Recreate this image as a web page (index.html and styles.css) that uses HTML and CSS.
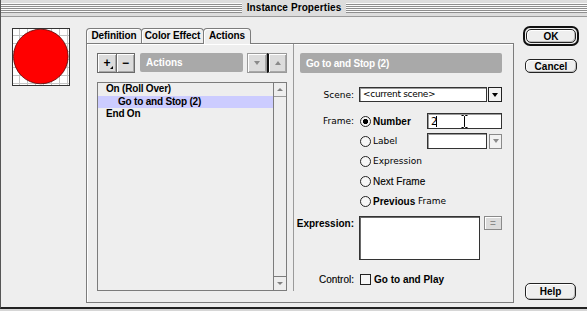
FILE: index.html
```html
<!DOCTYPE html>
<html>
<head>
<meta charset="utf-8">
<title>Instance Properties</title>
<link rel="stylesheet" href="styles.css">
</head>
<body>
<div class="window">
  <div class="titlebar"><span class="title">Instance Properties</span></div>
  <div class="content">
    <div class="preview">
      <svg width="58" height="58" viewBox="0 0 58 58">
        <rect x="0.5" y="0.5" width="57" height="57" fill="#fff" stroke="#333"/>
        <g stroke="#c4c4c4" stroke-width="1">
          <line x1="7.5" y1="1" x2="7.5" y2="57"/><line x1="15.5" y1="1" x2="15.5" y2="57"/>
          <line x1="23.5" y1="1" x2="23.5" y2="57"/><line x1="31.5" y1="1" x2="31.5" y2="57"/>
          <line x1="39.5" y1="1" x2="39.5" y2="57"/><line x1="47.5" y1="1" x2="47.5" y2="57"/>
          <line x1="55.5" y1="1" x2="55.5" y2="57"/>
          <line x1="1" y1="7.5" x2="57" y2="7.5"/><line x1="1" y1="15.5" x2="57" y2="15.5"/>
          <line x1="1" y1="23.5" x2="57" y2="23.5"/><line x1="1" y1="31.5" x2="57" y2="31.5"/>
          <line x1="1" y1="39.5" x2="57" y2="39.5"/><line x1="1" y1="47.5" x2="57" y2="47.5"/>
          <line x1="1" y1="55.5" x2="57" y2="55.5"/>
        </g>
        <circle cx="28.8" cy="28.5" r="27.3" fill="#ff0000" stroke="#5a0000" stroke-width="0.8"/>
      </svg>
    </div>

    <div class="tabbox">
      <div class="tabs">
        <div class="tab t-def">Definition</div>
        <div class="tab t-col">Color Effect</div>
        <div class="tab t-act active">Actions</div>
      </div>
      <div class="panel">
        <div class="left">
          <div class="toolbar">
            <div class="bevel pm plus">+<span class="corner"></span></div>
            <div class="bevel pm minus">&minus;</div>
            <div class="hdr hdr-actions">Actions</div>
            <div class="arrows">
              <div class="bevel abtn"><span class="tri down gray"></span></div>
              <div class="bevel abtn second"><span class="tri up gray"></span></div>
            </div>
          </div>
          <div class="list">
            <div class="rows">
              <div class="row">On (Roll Over)</div>
              <div class="row sel indent">Go to and Stop (2)</div>
              <div class="row">End On</div>
            </div>
            <div class="scrollbar">
              <div class="sarrow sup"><span class="tri up small"></span></div>
              <div class="strack"></div>
              <div class="sarrow sdown"><span class="tri down small"></span></div>
            </div>
          </div>
        </div>

        <div class="right">
          <div class="hdr hdr-right">Go to and Stop (2)</div>

          <div class="frow r-scene">
            <div class="lbl g">Scene:</div>
            <div class="field popup-scene g">&lt;current scene&gt;</div>
            <div class="pbtn"><span class="tri down"></span></div>
          </div>

          <div class="frow radio-row r-frame">
            <div class="lbl g">Frame:</div>
            <div class="opt"><span class="radio on"></span>Number</div>
            <div class="field num">2<span class="caret"></span>
              <svg class="ibeam" width="7" height="13" viewBox="0 0 7 13"><path d="M0.5 0.5h2l1 1 1-1h2M3.5 1.5v10M0.5 12.5h2l1-1 1 1h2" fill="none" stroke="#000" stroke-width="1"/></svg>
            </div>
          </div>

          <div class="frow radio-row">
            <div class="lbl"></div>
            <div class="opt g"><span class="radio"></span>Label</div>
            <div class="field lblfield"></div>
            <div class="pbtn dis"><span class="tri down gray"></span></div>
          </div>

          <div class="frow radio-row">
            <div class="lbl"></div>
            <div class="opt g wide"><span class="radio"></span>Expression</div>
          </div>

          <div class="frow radio-row">
            <div class="lbl"></div>
            <div class="opt wide med"><span class="radio"></span>Next Frame</div>
          </div>

          <div class="frow radio-row">
            <div class="lbl"></div>
            <div class="opt wide"><span class="radio"></span>Previous&nbsp;<span class="g">Frame</span></div>
          </div>

          <div class="frow r-expr">
            <div class="lbl">Expression:</div>
            <div class="field textarea"></div>
            <div class="eqbtn">=</div>
          </div>

          <div class="frow r-ctrl">
            <div class="lbl med">Control:</div>
            <span class="check"></span>
            <span class="checktext">Go to and Play</span>
          </div>
        </div>
      </div>
    </div>

    <div class="buttons">
      <div class="ok-ring"><div class="pbutton ok">OK</div></div>
      <div class="pbutton cancel">Cancel</div>
      <div class="pbutton help">Help</div>
    </div>
  </div>
</div>
</body>
</html>
```

FILE: styles.css
```css
* { box-sizing: border-box; }
html, body { margin: 0; padding: 0; }
body {
  width: 587px;
  height: 311px;
  overflow: hidden;
  background: #d6d6d6;
  font-family: "Liberation Sans", Arial, sans-serif;
  font-size: 10px;
  font-weight: bold;
  color: #000;
}
.g {
  font-family: "DejaVu Sans", Verdana, sans-serif;
  font-size: 9px;
  font-weight: normal;
}
.med {
  font-weight: normal;
  -webkit-text-stroke: 0.12px #000;
}

.window {
  width: 587px;
  height: 309px;
  display: flex;
  flex-direction: column;
  background: #eeeeee;
  border-left: 1px solid #555;
  border-bottom: 2px solid #222;
}

/* title bar */
.titlebar {
  flex: none;
  height: 17px;
  border-bottom: 1px solid #9a9a9a;
  display: flex;
  align-items: center;
  justify-content: center;
  background:
    repeating-linear-gradient(to bottom, #fbfbfb 0 1px, #8e8e8e 1px 2px) 0 3px / 100% 10px no-repeat,
    #dddddd;
}
.title {
  background: #dddddd;
  padding: 0 5px;
  line-height: 16px;
  letter-spacing: 0.1px;
}

.content {
  flex: 1;
  display: flex;
  align-items: flex-start;
}

.preview {
  flex: none;
  width: 58px;
  height: 58px;
  margin: 11px 0 0 11px;
}
.preview svg { display: block; }

/* tabs */
.tabbox {
  flex: none;
  width: 428px;
  margin: 11px 0 0 16px;
}
.tabs {
  display: flex;
  align-items: flex-start;
  height: 15px;
}
.tab {
  height: 15px;
  border: 1px solid #7c7c7c;
  border-bottom: none;
  border-radius: 4px 4px 0 0;
  margin-right: -1px;
  text-align: center;
  line-height: 13px;
  background: #eeeeee;
  white-space: nowrap;
  box-shadow: inset 1px 1px 0 #fff;
  letter-spacing: -0.1px;
}
.t-def { width: 56px; }
.t-col { width: 63px; }
.t-act { width: 48px; }
.tab.active {
  height: 16px;
  position: relative;
  z-index: 1;
}

.panel {
  height: 260px;
  border: 1px solid #7c7c7c;
  display: flex;
  background: #eeeeee;
  box-shadow: inset 1px 1px 0 #fff;
}

/* left half */
.left {
  width: 206px;
  flex: none;
  padding: 9px 0 0 10px;
  display: flex;
  flex-direction: column;
}
.toolbar {
  display: flex;
  height: 20px;
  align-items: flex-start;
}
.bevel {
  background: #dcdcdc;
  border: 1px solid #6a6a6a;
  box-shadow: inset 1px 1px 0 #fff, inset -1px -1px 0 #a8a8a8;
}
.pm {
  height: 20px;
  display: flex;
  align-items: center;
  justify-content: center;
  font-size: 12px;
  position: relative;
}
.plus { width: 20px; }
.minus { width: 19px; margin-left: -1px; }
.corner {
  position: absolute;
  right: 3px;
  bottom: 3px;
  width: 0;
  height: 0;
  border-left: 3px solid transparent;
  border-bottom: 3px solid #000;
}
.hdr {
  background: #a9a9a9;
  color: #fff;
  border-radius: 2px;
  display: flex;
  align-items: center;
  white-space: nowrap;
}
.hdr-actions {
  width: 103px;
  height: 19px;
  margin-left: 5px;
  padding-left: 6px;
}
.arrows {
  display: flex;
  margin-left: 4px;
  width: 40px;
  height: 20px;
}
.abtn {
  width: 20px;
  height: 20px;
  display: flex;
  align-items: center;
  justify-content: center;
  border-color: #9a9a9a;
}
.abtn.second { border-left: 2px solid #111; }

.tri {
  width: 0;
  height: 0;
  border-left: 3.5px solid transparent;
  border-right: 3.5px solid transparent;
}
.tri.down { border-top: 4px solid #000; }
.tri.up { border-bottom: 4px solid #000; }
.tri.gray.down { border-top-color: #8a8a8a; }
.tri.gray.up { border-bottom-color: #8a8a8a; }
.tri.small.down { border-top: 3px solid #808080; border-left-width: 3px; border-right-width: 3px; }
.tri.small.up { border-bottom: 3px solid #808080; border-left-width: 3px; border-right-width: 3px; }

.list {
  margin-top: 9px;
  width: 190px;
  height: 209px;
  border: 1px solid #7c7c7c;
  display: flex;
  background: #eeeeee;
}
.rows {
  flex: 1;
}
.row {
  height: 12.5px;
  line-height: 12px;
  padding-left: 8px;
  white-space: nowrap;
  letter-spacing: -0.2px;
}
.row.indent { padding-left: 20px; }
.row.sel { background: #ccccff; }
.scrollbar {
  width: 13px;
  border-left: 1px solid #7c7c7c;
  display: flex;
  flex-direction: column;
}
.sarrow {
  height: 14px;
  display: flex;
  align-items: center;
  justify-content: center;
}
.sup { border-bottom: 1px solid #9a9a9a; }
.sdown { border-top: 1px solid #7c7c7c; }
.strack { flex: 1; }

/* right half */
.right {
  flex: 1;
  height: 247px;
  border-left: 1px solid #9a9a9a;
  padding: 9px 0 0 6px;
  display: flex;
  flex-direction: column;
}
.hdr-right {
  width: 202px;
  height: 20px;
  padding-left: 6px;
  letter-spacing: -0.2px;
}
.frow {
  display: flex;
  align-items: center;
  white-space: nowrap;
}
.lbl {
  width: 54px;
  margin-right: 5px;
  flex: none;
  display: flex;
  justify-content: flex-end;
}
.field {
  background: #fff;
  border: 1px solid #333;
  box-shadow: inset 1px 1px 0 #9a9a9a;
}
.r-scene { margin-top: 14px; height: 15px; }
.popup-scene {
  width: 128px;
  height: 15px;
  line-height: 13px;
  padding-left: 3px;
  letter-spacing: -0.3px;
}
.pbtn {
  width: 14px;
  height: 15px;
  margin-left: 1px;
  border: 1px solid #222;
  background: #f2f2f2;
  display: flex;
  align-items: center;
  justify-content: center;
}
.pbtn.dis {
  width: 13px;
  margin-left: 2px;
  border-color: #8a8a8a;
}

.radio-row { height: 20px; }
.r-frame { margin-top: 9px; }
.opt {
  width: 68px;
  display: flex;
  align-items: center;
  flex: none;
}
.opt.wide { width: 140px; }
.radio {
  width: 11px;
  height: 11px;
  border: 1px solid #222;
  border-radius: 50%;
  background: #f6f6f6;
  margin: 0 2px 0 1px;
  flex: none;
}
.radio.on {
  background: radial-gradient(circle, #000 0 2.4px, #f6f6f6 2.9px);
}
.num {
  width: 75px;
  height: 16px;
  display: flex;
  align-items: center;
  padding-left: 3px;
  font-family: "DejaVu Sans", sans-serif;
  font-weight: normal;
  font-size: 10px;
}
.caret {
  width: 1px;
  height: 11px;
  background: #000;
  margin-left: -1px;
}
.ibeam { margin-left: 24px; display: block; }
.lblfield {
  width: 60px;
  height: 16px;
}

.r-expr {
  margin-top: 5px;
  align-items: flex-start;
}
.r-expr .lbl { padding-top: 2px; }
.textarea {
  width: 121px;
  height: 44px;
  box-shadow: inset 1px 1px 0 #6a6a6a;
}
.eqbtn {
  width: 18px;
  height: 14px;
  margin-left: 4px;
  background: #dcdcdc;
  border: 1px solid #8a8a8a;
  box-shadow: inset 1px 1px 0 #fff;
  color: #8a8a8a;
  font-weight: normal;
  font-size: 10px;
  display: flex;
  align-items: center;
  justify-content: center;
}
.r-ctrl { margin-top: 13px; height: 12px; }
.check {
  width: 11px;
  height: 11px;
  border: 1px solid #222;
  background: #f6f6f6;
  flex: none;
  margin-left: 1px;
}
.checktext { margin-left: 3px; }

/* dialog buttons */
.buttons {
  flex: none;
  width: 56px;
  height: 281px;
  margin: 9px 0 0 9px;
  display: flex;
  flex-direction: column;
}
.ok-ring {
  height: 20px;
  border: 2px solid #111;
  border-radius: 7px;
  padding: 1px;
}
.pbutton {
  border: 1px solid #222;
  border-radius: 5px;
  background: #eeeeee;
  display: flex;
  align-items: center;
  justify-content: center;
  box-shadow: inset 1px 1px 0 #fff, inset -1px -1px 0 #bdbdbd;
}
.ok { height: 14px; }
.cancel {
  width: 52px;
  height: 14px;
  margin: 13px 0 0 2px;
}
.help {
  width: 51px;
  height: 17px;
  margin: auto 0 7px 2px;
}
```
